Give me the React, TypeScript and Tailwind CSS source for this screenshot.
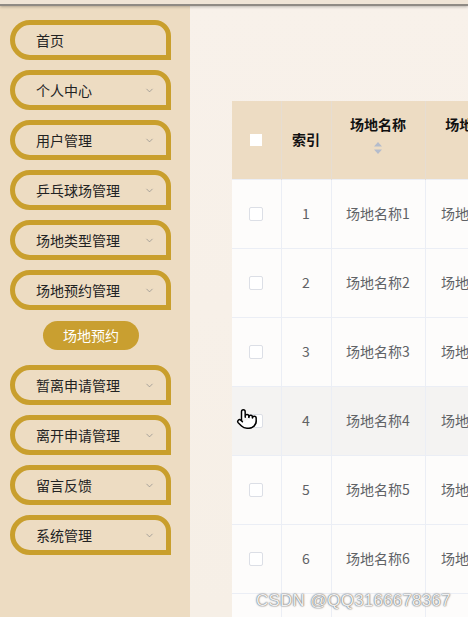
import { ChevronDown, Pointer } from 'lucide-react';

const menus = [
  { label: '首页', arrow: false },
  { label: '个人中心', arrow: true },
  { label: '用户管理', arrow: true },
  { label: '乒乓球场管理', arrow: true },
  { label: '场地类型管理', arrow: true },
  { label: '场地预约管理', arrow: true, sub: '场地预约' },
  { label: '暂离申请管理', arrow: true },
  { label: '离开申请管理', arrow: true },
  { label: '留言反馈', arrow: true },
  { label: '系统管理', arrow: true },
];

const rows = [1, 2, 3, 4, 5, 6, 7];

function SortIcon() {
  return (
    <svg width="10" height="14" viewBox="0 0 10 14" className="mt-[6px]">
      <path d="M5 1 L9 5.5 H1 Z" fill="#b4bccc" />
      <path d="M5 13 L9 8.5 H1 Z" fill="#b4bccc" />
    </svg>
  );
}

export default function App() {
  return (
    <div
      className="relative w-[468px] h-[617px] overflow-hidden flex flex-col bg-[#f7f0e8]"
      style={{ fontFamily: '"Microsoft YaHei", "Noto Sans CJK SC", "Noto Sans", sans-serif' }}
    >
      <div className="h-[6px] shrink-0 bg-[#efe4d6] border-b-2 border-[#8f8a84] shadow-[0_1px_3px_rgba(0,0,0,0.25)] z-10" />

      <div className="flex flex-1 min-h-0">
        <aside className="w-[190px] shrink-0 bg-[#eddcc2] pl-[10px] pt-[14px] flex flex-col gap-[10px]">
          {menus.map((m) => (
            <div key={m.label} className="flex flex-col">
              <div className="w-[161px] h-[40px] border-[5px] border-[#c99f2d] rounded-l-[20px] rounded-tr-[16px] flex items-center justify-between pl-[21px] pr-[11px] text-[14px] text-[#222]">
                <span>{m.label}</span>
                {m.arrow && <ChevronDown size={11} strokeWidth={1.5} className="text-[#888]" />}
              </div>
              {m.sub && (
                <div className="ml-[33px] mt-[11px] mb-[5px] w-[96px] h-[29px] rounded-full bg-[#c99f30] text-white text-[14px] flex items-center justify-center">
                  {m.sub}
                </div>
              )}
            </div>
          ))}
        </aside>

        <main className="flex-1 min-w-0 overflow-hidden pl-[42px] pt-[95px] bg-gradient-to-b from-[#f8f1ea] to-[#f6efe6]">
          <table className="border-collapse table-fixed w-[289px] text-[14px]">
            <colgroup>
              <col className="w-[49px]" />
              <col className="w-[50px]" />
              <col className="w-[94px]" />
              <col className="w-[96px]" />
            </colgroup>
            <thead>
              <tr className="h-[78px] bg-[#eddcc3]">
                <th className="border-r border-[#e6ddd2]">
                  <div className="mx-auto w-[12px] h-[12px] bg-white" />
                </th>
                <th className="border-r border-[#e6ddd2] font-bold text-[#111]">索引</th>
                <th className="border-r border-[#e6ddd2] font-bold text-[#111]">
                  <div className="flex flex-col items-center -mt-[10px]">
                    <span>场地名称</span>
                    <SortIcon />
                  </div>
                </th>
                <th className="font-bold text-[#111] whitespace-nowrap">
                  <div className="flex flex-col items-center -mt-[10px]">
                    <span>场地类型</span>
                    <SortIcon />
                  </div>
                </th>
              </tr>
            </thead>
            <tbody>
              {rows.map((n) => (
                <tr key={n} className={`h-[69px] ${n === 4 ? 'bg-[#f4f3f2]' : 'bg-[#fdfcfb]'}`}>
                  <td className="border border-[#ebeef5] border-l-0">
                    <div className="mx-auto w-[14px] h-[14px] rounded-[2px] border border-[#dcdfe6] bg-white" />
                  </td>
                  <td className="border border-[#ebeef5] text-center text-[#606266]">{n}</td>
                  <td className="border border-[#ebeef5] text-center text-[#606266]">场地名称{n}</td>
                  <td className="border border-[#ebeef5] text-center text-[#606266] whitespace-nowrap">场地类型{n}</td>
                </tr>
              ))}
            </tbody>
          </table>
        </main>
      </div>

      <Pointer
        size={22}
        strokeWidth={1.6}
        className="absolute left-[236px] top-[408px] text-black fill-white"
      />

      <div
        className="absolute left-[256px] top-[588px] text-[17px] tracking-[0.2px] text-white/90 [text-shadow:0_0_1px_#555,0_0_2px_#777]"
        style={{ fontFamily: '"Liberation Sans", Arial, sans-serif' }}
      >
        CSDN @QQ3166678367
      </div>
    </div>
  );
}
